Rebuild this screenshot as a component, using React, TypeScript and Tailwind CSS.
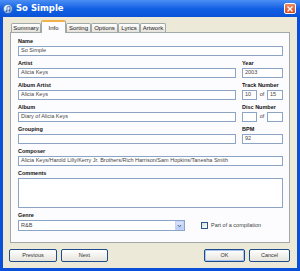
import React from "react";

const font = { fontFamily: '"Liberation Sans", Arial, sans-serif' };

function Label({ children }: { children: React.ReactNode }) {
  return (
    <div className="h-[9px] flex items-center text-[5.5px] font-bold leading-none text-[#111] whitespace-nowrap">
      {children}
    </div>
  );
}

function Input({ value, className = "" }: { value?: string; className?: string }) {
  return (
    <div
      className={`h-[10px] border border-[#8CA5C4] bg-white px-[2px] flex items-center text-[5.5px] leading-none text-[#444] whitespace-nowrap overflow-hidden ${className}`}
    >
      {value}
    </div>
  );
}

function Field({ label, value }: { label: string; value?: string }) {
  return (
    <div className="flex flex-col">
      <Label>{label}</Label>
      <Input value={value} />
    </div>
  );
}

function Tab({ label, active = false, w }: { label: string; active?: boolean; w: string }) {
  if (active) {
    return (
      <div
        className={`${w} h-[13px] mb-[-1px] relative z-10 bg-[#FCFCFE] border-x border-[#A0A8A9] border-t-2 border-t-[#F2B24B] rounded-t-[2px] flex items-center justify-center text-[6px] leading-none text-[#222]`}
      >
        {label}
      </div>
    );
  }
  return (
    <div
      className={`${w} h-[9px] bg-gradient-to-b from-white to-[#E4E2DA] border border-b-0 border-[#A0A8A9] rounded-t-[2px] flex items-center justify-center text-[6px] leading-none text-[#222]`}
    >
      {label}
    </div>
  );
}

function Button({ label, w, def = false }: { label: string; w: string; def?: boolean }) {
  return (
    <div
      className={`${w} h-[13px] rounded-[2px] border border-[#1D4C86] bg-gradient-to-b from-white to-[#E6E4DC] flex items-center justify-center text-[5.5px] leading-none text-[#333] ${
        def ? "shadow-[inset_0_0_0_1px_#A9C4F0]" : ""
      }`}
    >
      {label}
    </div>
  );
}

export default function App() {
  return (
    <div
      className="w-[300px] h-[271px] flex flex-col bg-[#0A4FD8] overflow-hidden"
      style={font}
    >
      {/* Title bar */}
      <div className="h-[17px] shrink-0 flex items-center pl-[3px] pr-[4px] bg-gradient-to-b from-[#4A8EF4] via-[#1260E4] to-[#0A52D8]">
        <svg width="10" height="10" viewBox="0 0 10 10" className="shrink-0">
          <defs>
            <radialGradient id="ic" cx="0.35" cy="0.35" r="0.7">
              <stop offset="0" stopColor="#ffffff" />
              <stop offset="0.6" stopColor="#BFD8F6" />
              <stop offset="1" stopColor="#5F8FC8" />
            </radialGradient>
          </defs>
          <circle cx="5" cy="5" r="4.6" fill="url(#ic)" stroke="#2A5AA0" strokeWidth="0.5" />
          <path d="M4 7.2 V3 L7 2.4 V6.4" stroke="#2B5FB0" strokeWidth="0.8" fill="none" />
          <circle cx="3.4" cy="7.2" r="0.9" fill="#2B5FB0" />
          <circle cx="6.4" cy="6.5" r="0.9" fill="#2B5FB0" />
        </svg>
        <div
          className="ml-[3px] text-[8.5px] font-bold text-white leading-none"
          style={{ fontFamily: '"DejaVu Sans", "Liberation Sans", sans-serif' }}
        >
          So Simple
        </div>
        <div className="flex-1" />
        <div className="w-[12px] h-[11px] rounded-[2px] border border-white bg-gradient-to-b from-[#EF8A5E] to-[#D8441C] flex items-center justify-center">
          <svg width="6" height="6" viewBox="0 0 6 6">
            <path d="M1 1 L5 5 M5 1 L1 5" stroke="white" strokeWidth="1.3" strokeLinecap="square" />
          </svg>
        </div>
      </div>

      {/* Body */}
      <div className="flex-1 mx-[3px] mb-[3px] bg-[#ECE9D8] flex flex-col pt-[3px] px-[7px]">
        {/* Tabs */}
        <div className="h-[12px] flex items-end pl-[1px]">
          <Tab label="Summary" w="w-[30px]" />
          <Tab label="Info" active w="w-[25px]" />
          <Tab label="Sorting" w="w-[25px]" />
          <Tab label="Options" w="w-[27px]" />
          <Tab label="Lyrics" w="w-[22px]" />
          <Tab label="Artwork" w="w-[26px]" />
        </div>

        {/* Panel */}
        <div className="h-[211px] border border-[#A0A8A9] bg-[#FCFCFE] pt-[4px] pl-[7px] pr-[6px] flex flex-col gap-[3px]">
          <Field label="Name" value="So Simple" />

          <div className="flex gap-[6px]">
            <div className="flex-1">
              <Field label="Artist" value="Alicia Keys" />
            </div>
            <div className="w-[41px]">
              <Field label="Year" value="2003" />
            </div>
          </div>

          <div className="flex gap-[6px]">
            <div className="flex-1">
              <Field label="Album Artist" value="Alicia Keys" />
            </div>
            <div className="w-[41px] flex flex-col">
              <Label>Track Number</Label>
              <div className="flex items-center">
                <Input value="10" className="w-[15px]" />
                <div className="w-[10px] text-center text-[5.5px] leading-none text-[#444]">of</div>
                <Input value="15" className="w-[16px]" />
              </div>
            </div>
          </div>

          <div className="flex gap-[6px]">
            <div className="flex-1">
              <Field label="Album" value="Diary of Alicia Keys" />
            </div>
            <div className="w-[41px] flex flex-col">
              <Label>Disc Number</Label>
              <div className="flex items-center">
                <Input className="w-[15px]" />
                <div className="w-[10px] text-center text-[5.5px] leading-none text-[#444]">of</div>
                <Input className="w-[16px]" />
              </div>
            </div>
          </div>

          <div className="flex gap-[6px]">
            <div className="flex-1">
              <Field label="Grouping" />
            </div>
            <div className="w-[41px]">
              <Field label="BPM" value="92" />
            </div>
          </div>

          <Field
            label="Composer"
            value="Alicia Keys/Harold Lilly/Kerry Jr. Brothers/Rich Harrison/Sam Hopkins/Tanesha Smith"
          />

          <div className="flex flex-col">
            <Label>Comments</Label>
            <div className="h-[30px] border border-[#8CA5C4] bg-white" />
          </div>

          <div className="flex items-end">
            <div className="w-[167px] flex flex-col">
              <Label>Genre</Label>
              <div className="h-[11px] border border-[#8CA5C4] bg-white flex items-center pl-[2px] text-[5.5px] leading-none text-[#444]">
                <span className="flex-1">R&amp;B</span>
                <div className="w-[9px] h-[9px] bg-gradient-to-b from-[#DCE6FB] to-[#B6CBF4] border border-[#C3D3FD] flex items-center justify-center">
                  <svg width="5" height="4" viewBox="0 0 5 4">
                    <path d="M0.8 1 L2.5 2.8 L4.2 1" stroke="#4D6185" strokeWidth="1" fill="none" />
                  </svg>
                </div>
              </div>
            </div>
            <div className="ml-[16px] h-[11px] flex items-center gap-[3px]">
              <div className="w-[7px] h-[7px] border border-[#2A5A8A] bg-gradient-to-br from-[#DCDCD7] to-white" />
              <span className="text-[5.5px] leading-none text-[#444]">Part of a compilation</span>
            </div>
          </div>
        </div>

        {/* Buttons */}
        <div className="mt-[6px] flex items-center ml-[-1px]">
          <Button label="Previous" w="w-[48px]" />
          <div className="w-[4px]" />
          <Button label="Next" w="w-[47px]" />
          <div className="flex-1" />
          <Button label="OK" w="w-[41px]" def />
          <div className="w-[4px]" />
          <Button label="Cancel" w="w-[41px]" />
        </div>
      </div>
    </div>
  );
}
